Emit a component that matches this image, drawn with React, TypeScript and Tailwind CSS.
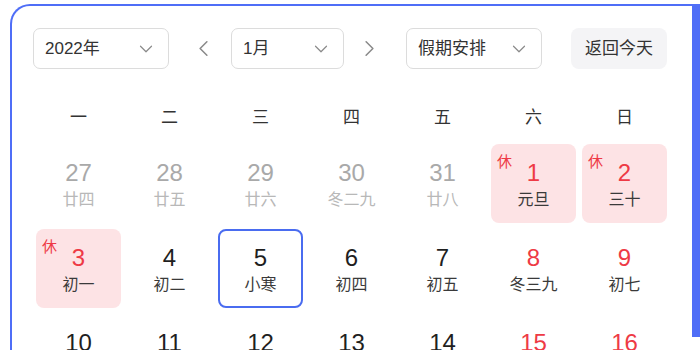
import { ChevronDown, ChevronLeft, ChevronRight } from "lucide-react";

type Day = {
  n: number;
  lunar: string;
  other?: boolean;
  red?: boolean;
  rest?: boolean;
  selected?: boolean;
};

const weekdays = ["一", "二", "三", "四", "五", "六", "日"];

const days: Day[] = [
  { n: 27, lunar: "廿四", other: true },
  { n: 28, lunar: "廿五", other: true },
  { n: 29, lunar: "廿六", other: true },
  { n: 30, lunar: "冬二九", other: true },
  { n: 31, lunar: "廿八", other: true },
  { n: 1, lunar: "元旦", red: true, rest: true },
  { n: 2, lunar: "三十", red: true, rest: true },
  { n: 3, lunar: "初一", red: true, rest: true },
  { n: 4, lunar: "初二" },
  { n: 5, lunar: "小寒", selected: true },
  { n: 6, lunar: "初四" },
  { n: 7, lunar: "初五" },
  { n: 8, lunar: "冬三九", red: true },
  { n: 9, lunar: "初七", red: true },
  { n: 10, lunar: "初八" },
  { n: 11, lunar: "初九" },
  { n: 12, lunar: "初十" },
  { n: 13, lunar: "十一" },
  { n: 14, lunar: "十二" },
  { n: 15, lunar: "十三", red: true },
  { n: 16, lunar: "十四", red: true },
];

function Select({ label, width }: { label: string; width: string }) {
  return (
    <div className={`${width} h-[41px] flex items-center justify-between pl-[11px] pr-[11px] border border-[#dcdcdc] rounded-[7px] bg-white`}>
      <span className="text-[17px] text-[#333]">{label}</span>
      <ChevronDown className="w-[22px] h-[22px] text-[#8a8a8a]" strokeWidth={1.3} />
    </div>
  );
}

function Cell({ d }: { d: Day }) {
  const numColor = d.other ? "text-[#a9a9a9]" : d.red ? "text-[#ee3a45]" : "text-[#1f1f1f]";
  const lunarColor = d.other ? "text-[#b8b8b8]" : "text-[#3a3a3a]";
  const box = d.rest
    ? "bg-[#fde3e5] rounded-[8px]"
    : d.selected
      ? "border-2 border-[#4a6cf0] rounded-[8px]"
      : "";
  return (
    <div className={`relative h-[79px] flex flex-col items-center ${box} ${d.selected ? "pt-[15px]" : "pt-[17px]"}`}>
      {d.rest && (
        <span className="absolute top-[9px] left-[6px] text-[15px] leading-[18px] text-[#ee3a45]">休</span>
      )}
      <span className={`text-[24px] leading-[24px] ${numColor}`}>{d.n}</span>
      <span className={`mt-[5px] text-[16px] leading-[20px] ${lunarColor}`}>{d.lunar}</span>
    </div>
  );
}

export default function App() {
  return (
    <div
      className="h-[350px] w-[700px] overflow-hidden bg-white flex"
      style={{ fontFamily: '"Liberation Sans", "Noto Sans CJK SC", sans-serif' }}
    >
      <div className="ml-[10px] mt-[4px] w-[682px] h-[420px] border-2 border-r-0 border-[#4f6ef7] rounded-tl-[20px] px-[21px] pt-[22px] bg-white">
        <div className="flex items-center">
          <Select label="2022年" width="w-[136px]" />
          <ChevronLeft className="ml-[21px] w-[27px] h-[27px] text-[#8a8a8a]" strokeWidth={1.4} />
          <div className="ml-[14px]">
            <Select label="1月" width="w-[113px]" />
          </div>
          <ChevronRight className="ml-[12px] w-[27px] h-[27px] text-[#8a8a8a]" strokeWidth={1.4} />
          <div className="ml-[23px]">
            <Select label="假期安排" width="w-[136px]" />
          </div>
          <div className="ml-[29px] w-[96px] h-[41px] flex items-center justify-center rounded-[8px] bg-[#f4f4f6] text-[17px] text-[#333]">
            返回今天
          </div>
        </div>

        <div className="ml-[3px] w-[631px] grid grid-cols-7 gap-x-[6px] mt-[29px]">
          {weekdays.map((w) => (
            <div key={w} className="h-[40px] flex items-center justify-center text-[17px] text-[#333]">
              {w}
            </div>
          ))}
        </div>

        <div className="ml-[3px] w-[631px] grid grid-cols-7 gap-x-[6px] gap-y-[6px] mt-[6px]">
          {days.map((d, i) => (
            <Cell key={i} d={d} />
          ))}
        </div>
      </div>
      <div className="mt-[4px] w-[8px] h-[333px] bg-[#4f6ef7] shrink-0" />
    </div>
  );
}
